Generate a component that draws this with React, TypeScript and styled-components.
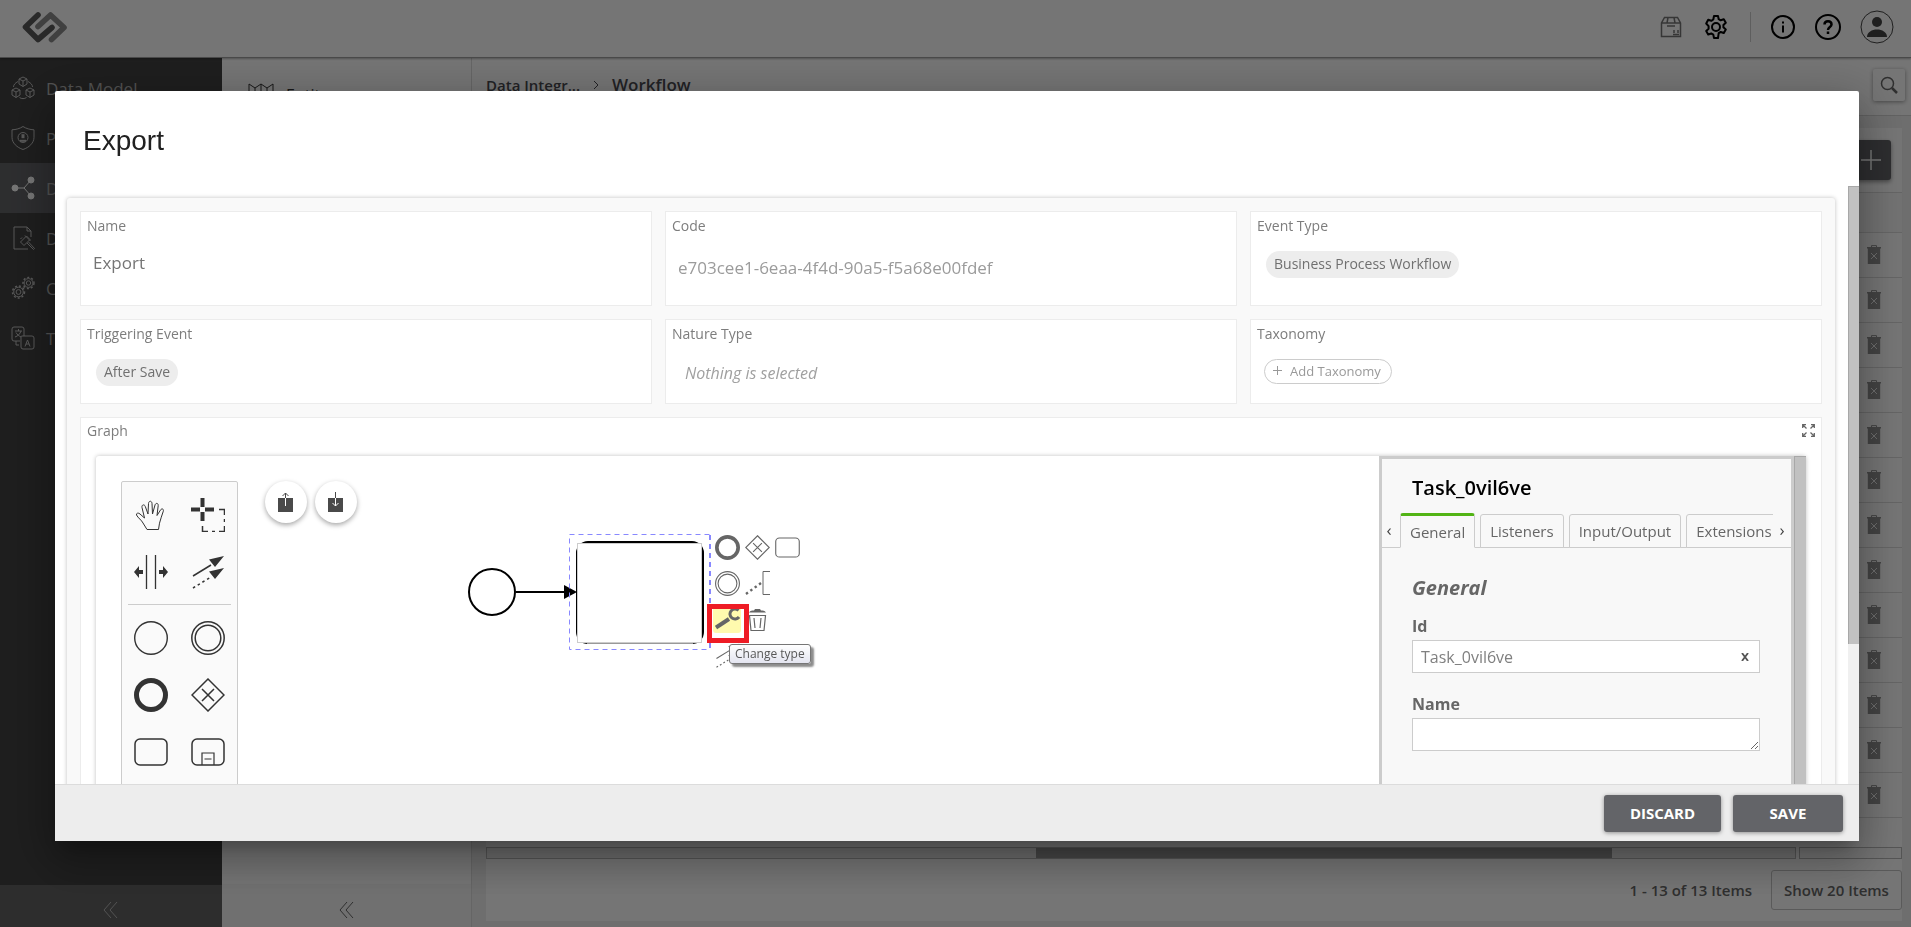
import React from 'react';
import styled, { createGlobalStyle, css } from 'styled-components';

const Global = createGlobalStyle`
  *, *::before, *::after { box-sizing: border-box; }
  html, body, #root { height: 100%; }
  body {
    margin: 0;
    overflow: hidden;
    font-family: "Open Sans", "Noto Sans", sans-serif;
    background: #f0f0f0;
  }
  button, input, textarea { font-family: inherit; margin: 0; }
  h1, h2, h3, p, ul { margin: 0; padding: 0; }
  svg { display: block; flex: none; }
`;

/* ---------- application behind the dialog ---------- */

const Shell = styled.div`
  height: 100vh;
  display: flex;
  flex-direction: column;
`;

const Header = styled.header`
  flex: none;
  height: 58px;
  padding: 0 17px 3px 22px;
  display: flex;
  align-items: center;
  justify-content: space-between;
  background: #fff;
  border-bottom: 1px solid #a0a0a0;
  box-shadow: 0 1px 2px rgba(0, 0, 0, 0.3);
  position: relative;
`;

const HeaderTools = styled.div`
  display: flex;
  align-items: center;
`;

const IconButton = styled.button<{ $gap?: number }>`
  padding: 0;
  border: 0;
  background: none;
  color: inherit;
  margin-left: ${(p) => p.$gap ?? 0}px;
`;

const Divider = styled.span`
  width: 1px;
  height: 30px;
  margin-left: 22px;
  background: #ccc;
`;

const Columns = styled.div`
  flex: 1;
  min-height: 0;
  display: flex;
`;

const Sidebar = styled.nav`
  width: 222px;
  flex: none;
  display: flex;
  flex-direction: column;
  background: #424242;
  padding-top: 5px;
`;

const NavItem = styled.a<{ $active?: boolean }>`
  height: 50px;
  padding-left: 11px;
  display: flex;
  align-items: center;
  gap: 11px;
  font-size: 17px;
  text-decoration: none;
  color: #b4b4b4;
  background: ${(p) => (p.$active ? '#636468' : 'transparent')};
  svg { color: ${(p) => (p.$active ? '#fff' : '#c0c0c0')}; }
`;

const CollapseBar = styled.button<{ $dark?: boolean }>`
  margin-top: auto;
  height: ${(p) => (p.$dark ? 42 : 43)}px;
  padding: 8px 0 0;
  border: 0;
  display: flex;
  justify-content: center;
  align-items: center;
  color: ${(p) => (p.$dark ? '#b4b4b4' : '#666')};
  background: ${(p) => (p.$dark ? '#636363' : '#f5f5f5')};
`;

const SubMenu = styled.nav`
  width: 250px;
  flex: none;
  display: flex;
  flex-direction: column;
  background: #fff;
  border-right: 1px solid #ddd;
  padding-top: 15px;
`;

const SubItem = styled.a`
  height: 44px;
  padding-left: 26px;
  display: flex;
  align-items: center;
  gap: 12px;
  font-size: 16px;
  color: #333;
  text-decoration: none;
`;

const Main = styled.main`
  flex: 1;
  min-width: 0;
  display: flex;
  flex-direction: column;
`;

const Crumbs = styled.div`
  height: 58px;
  flex: none;
  padding: 0 6px 4px 14px;
  display: flex;
  align-items: center;
  gap: 10px;
  background: #fff;
  border-bottom: 1px solid #d5d5d5;
  font-size: 15px;
  font-weight: 600;
  color: #4a4a50;
  strong { font-size: 17px; font-weight: 600; }
`;

const SearchButton = styled.button`
  margin-left: auto;
  width: 32px;
  height: 32px;
  padding: 0;
  display: grid;
  place-items: center;
  border: 0;
  border-radius: 2px;
  background: #fff;
  color: #666;
  box-shadow: 0 1px 4px rgba(0, 0, 0, 0.4);
`;

const Grid = styled.section`
  flex: 1;
  min-height: 0;
  margin: 12px 9px 6px 14px;
  background: #fff;
  display: flex;
  flex-direction: column;
`;

const GridTools = styled.div`
  height: 65px;
  padding: 12px 11px;
  display: flex;
  justify-content: flex-end;
  border-bottom: 1px solid #dcdcdc;
`;

const AddButton = styled.button`
  width: 40px;
  height: 40px;
  padding: 0;
  display: grid;
  place-items: center;
  border: 0;
  border-radius: 3px;
  color: #fff;
  background: #636468;
  box-shadow: 0 2px 4px rgba(0, 0, 0, 0.4);
`;

const Rows = styled.table`
  width: 100%;
  border-collapse: collapse;
  th { height: 39px; background: #f8f8f8; border-bottom: 1px solid #dcdcdc; padding: 0; }
  td { height: 45px; border-bottom: 1px solid #dcdcdc; padding: 0 21px 0 0; }
  td svg { margin-left: auto; color: #939393; }
`;

const ScrollRow = styled.div`
  margin-top: auto;
  flex: none;
  display: flex;
  gap: 3px;
  padding-top: 28px;
`;

const Track = styled.div<{ $wide?: boolean }>`
  height: 12px;
  display: flex;
  background: ${(p) => (p.$wide ? '#ececec' : '#fafafa')};
  border: 1px solid #b8b8b8;
  ${(p) => (p.$wide ? css`flex: 1;` : css`width: 103px;`)}
`;

const TrackThumb = styled.div`
  margin-left: 42%;
  width: 44%;
  background: #999;
`;

const Pager = styled.footer`
  flex: none;
  height: 62px;
  display: flex;
  align-items: center;
  justify-content: flex-end;
  gap: 19px;
  font-size: 15px;
  font-weight: 600;
  color: #666;
`;

const PageSize = styled.button`
  width: 131px;
  height: 40px;
  padding: 0;
  border: 1px solid #c4c4c4;
  border-radius: 3px;
  background: #fff;
  color: inherit;
  font-size: 15px;
  font-weight: 600;
`;

/* ---------- dialog ---------- */

const Backdrop = styled.div`
  position: fixed;
  inset: 0;
  padding: 91px 52px 86px 55px;
  background: rgba(0, 0, 0, 0.54);
  display: flex;
`;

const Dialog = styled.div`
  flex: 1;
  min-width: 0;
  display: flex;
  flex-direction: column;
  background: #fff;
  border-radius: 2px 2px 0 0;
  box-shadow: 0 11px 15px -7px rgba(0, 0, 0, 0.2), 0 24px 38px 3px rgba(0, 0, 0, 0.14),
    0 9px 46px 8px rgba(0, 0, 0, 0.22);
`;

const DialogTitle = styled.h1`
  flex: none;
  height: 95px;
  padding: 32px 28px 0;
  font: 400 28px/36px "Liberation Sans", Arial, sans-serif;
  color: #212121;
`;

const DialogBody = styled.div`
  flex: 1;
  min-height: 0;
  display: flex;
`;

const BodyScroll = styled.div`
  flex: 1;
  min-width: 0;
  overflow: hidden;
  padding: 12px 13px 0 12px;
`;

const VTrack = styled.div<{ $width: number }>`
  width: ${(p) => p.$width}px;
  flex: none;
  background: #f0f0f0;
`;

const VThumb = styled.div<{ $size: string }>`
  height: ${(p) => p.$size};
  background: #c1c1c1;
  border-left: 1px solid #a8a8a8;
  border-top: 1px solid #a8a8a8;
`;

const Panel = styled.div`
  padding: 13px;
  display: grid;
  grid-template-columns: repeat(3, 1fr);
  grid-template-rows: 95px 85px 500px;
  gap: 13px;
  background: #f9f9f9;
  border-radius: 3px;
  box-shadow: 0 0 4px rgba(0, 0, 0, 0.25);
`;

const Field = styled.div`
  min-width: 0;
  padding: 2px 6px;
  background: #fff;
  border: 1px solid #ececec;
`;

const FieldLabel = styled.label`
  display: block;
  font-size: 14px;
  line-height: 24px;
  color: #7d7d7d;
`;

const TextValue = styled.input<{ $muted?: boolean }>`
  display: block;
  width: 100%;
  height: 32px;
  margin-top: ${(p) => (p.$muted ? 13 : 8)}px;
  padding: 0 6px;
  border: 0;
  outline: 0;
  background: none;
  font-size: 17px;
  color: ${(p) => (p.$muted ? '#9b9b9b' : '#757575')};
`;

const Placeholder = styled.p`
  padding: 15px 13px;
  font-size: 16px;
  line-height: 24px;
  font-style: italic;
  color: #a0a0a0;
`;

const Chip = styled.span`
  display: inline-block;
  margin: 13px 9px;
  height: 27px;
  padding: 0 8px;
  border-radius: 14px;
  background: #ededed;
  font-size: 14px;
  line-height: 26px;
  color: #707070;
`;

const AddChip = styled.button`
  display: flex;
  align-items: center;
  gap: 8px;
  margin: 13px 7px;
  height: 25px;
  padding: 0 10px 2px 8px;
  border: 1px solid #ccc;
  border-radius: 13px;
  background: #fff;
  font-size: 13px;
  color: #999;
`;

const GraphField = styled(Field)`
  grid-column: 1 / -1;
  padding: 0 0 0 15px;
`;

const GraphHead = styled.div`
  height: 38px;
  margin-left: -9px;
  padding: 0 6px 13px 0;
  display: flex;
  align-items: center;
  justify-content: space-between;
  color: #666;
`;

const Editor = styled.div`
  margin-right: 15px;
  height: 460px;
  display: flex;
  border-radius: 3px 3px 0 0;
  background: #fff;
  box-shadow: 0 0 4px rgba(0, 0, 0, 0.25);
`;

const Canvas = styled.div`
  position: relative;
  flex: 1;
  min-width: 0;
  display: flex;
  align-items: flex-start;
  padding: 25px;
`;

const Palette = styled.div`
  width: 117px;
  height: 420px;
  padding: 4px 0 0;
  background: #fafafa;
  border: 1px solid #ccc;
  border-radius: 2px;
`;

const ToolGroup = styled.div`
  margin: 0 6px;
  padding-bottom: 4px;
  display: grid;
  grid-template-columns: 46px 46px;
  justify-content: space-between;
  grid-auto-rows: 57px;
  & + & { border-top: 1px solid #ccc; padding-top: 4px; }
`;

const Tool = styled.button`
  padding: 0;
  border: 0;
  background: none;
  display: grid;
  place-items: center;
  color: #333;
`;

const RoundButtons = styled.div`
  display: flex;
  gap: 8px;
  margin-left: 27px;
`;

const RoundButton = styled.button`
  width: 42px;
  height: 42px;
  padding: 0 1px 0 0;
  border: 0;
  border-radius: 50%;
  background: #fff;
  display: grid;
  place-items: center;
  box-shadow: 0 2px 5px rgba(0, 0, 0, 0.35);
`;

const Diagram = styled.svg`
  position: absolute;
  left: 364px;
  top: 69px;
`;

const PadArea = styled.div`
  position: absolute;
  left: 617px;
  top: 77px;
  display: grid;
  grid-template-columns: repeat(3, 30px);
  grid-auto-rows: 36px;
`;

const PadButton = styled.button<{ $hot?: boolean }>`
  width: 28px;
  height: 28px;
  padding: 0;
  border: 0;
  border-radius: 3px;
  display: grid;
  place-items: center;
  color: #666;
  background: ${(p) => (p.$hot ? '#fffaae' : 'none')};
  grid-column: ${(p) => (p.$hot ? '1' : 'auto')};
`;

const RedFrame = styled.div`
  position: absolute;
  left: 611px;
  top: 148px;
  width: 42px;
  height: 39px;
  border: 5px solid #ee1c25;
  pointer-events: none;
`;

const Tooltip = styled.div`
  position: absolute;
  left: 633px;
  top: 188px;
  padding: 0 5px;
  border: 1px solid #767676;
  border-radius: 3px;
  background: linear-gradient(#fff, #e4e5f0);
  box-shadow: 3px 3px 2px rgba(0, 0, 0, 0.45);
  font-size: 12px;
  line-height: 18px;
  white-space: nowrap;
  color: #575757;
`;

const Properties = styled.aside`
  width: 415px;
  flex: none;
  border: 3px solid #ccc;
  border-bottom: 0;
  background: #f8f8f8;
  color: #666;
`;

const ElementName = styled.h2`
  padding: 14px 30px 0;
  font-size: 20px;
  line-height: 30px;
  font-weight: 600;
  color: #000;
`;

const Tabs = styled.div`
  margin-top: 10px;
  height: 35px;
  display: flex;
  border-bottom: 1px solid #ccc;
`;

const TabList = styled.div`
  flex: 1;
  min-width: 0;
  height: 35px;
  display: flex;
  gap: 5px;
  overflow: hidden;
`;

const TabArrow = styled.button`
  width: 18px;
  flex: none;
  padding: 0 4px 2px 0;
  border: 0;
  background: none;
  font-size: 17px;
  color: #444;
  &:last-child { padding: 0 0 2px; }
`;

const Tab = styled.button<{ $active?: boolean }>`
  flex: none;
  padding: 0 9px;
  border: 1px solid #ccc;
  border-radius: 3px 3px 0 0;
  background: #f8f8f8;
  font-size: 15px;
  color: #666;
  margin-top: 1px;
  ${(p) =>
    p.$active &&
    css`
      margin-top: 0;
      border-top: 3px solid #52b415;
      border-bottom-color: #f8f8f8;
    `}
`;

const PropForm = styled.div`
  padding: 24px 31px 0 30px;
`;

const GroupTitle = styled.h3`
  font-size: 20px;
  line-height: 32px;
  font-style: italic;
  font-weight: 700;
`;

const PropLabel = styled.label`
  display: block;
  margin-top: 8px;
  font-size: 16px;
  line-height: 28px;
  font-weight: 700;
`;

const PropInputBox = styled.div`
  height: 33px;
  margin: 0 0 17px;
  display: flex;
  align-items: center;
  background: #fff;
  border: 1px solid #ccc;
`;

const PropInput = styled.input`
  flex: 1;
  min-width: 0;
  padding: 0 8px;
  border: 0;
  outline: 0;
  background: none;
  font-size: 16px;
  color: #808080;
`;

const ClearButton = styled.button`
  width: 28px;
  padding: 0;
  border: 0;
  background: none;
  display: grid;
  place-items: center;
  color: #555;
`;

const PropTextarea = styled.textarea`
  display: block;
  width: 100%;
  height: 33px;
  border: 1px solid #ccc;
  background: #fff;
`;

const DialogFooter = styled.div`
  flex: none;
  height: 57px;
  padding: 0 16px;
  display: flex;
  align-items: center;
  justify-content: flex-end;
  gap: 12px;
  background: #ededed;
  border-top: 1px solid #dcdcdc;
`;

const ActionButton = styled.button<{ $width: number }>`
  width: ${(p) => p.$width}px;
  height: 37px;
  padding: 0;
  border: 0;
  border-radius: 3px;
  background: #636468;
  color: #fff;
  font-size: 15px;
  font-weight: 700;
  box-shadow: 0 1px 4px rgba(0, 0, 0, 0.4);
`;

/* ---------- icons ---------- */

type GlyphProps = { size?: number; children: React.ReactNode; sw?: number; box?: number };
const Glyph = ({ size = 24, box = 24, sw = 1, children }: GlyphProps) => (
  <svg width={size} height={size} viewBox={`0 0 ${box} ${box}`} fill="none" stroke="currentColor" strokeWidth={sw}>
    {children}
  </svg>
);

const Logo = () => (
  <svg width="46" height="33" viewBox="0 0 46 33" fill="none" strokeWidth="5.6" strokeLinecap="round" strokeLinejoin="round">
    <path d="M16 15.500 28.500 4 42 16.500 29.500 28.500" stroke="#8b8b8b" />
    <path d="M16 4 3.500 16 16 28.500 30 16.500" stroke="#5a5a5a" />
  </svg>
);

const Cube = ({ x, y }: { x: number; y: number }) => (
  <path d={`M${x} ${y - 4.5}l4 2v5l-4 2.5-4-2.5v-5zM${x - 4} ${y - 2.5}l4 2 4-2M${x} ${y - 0.5}v5.5`} />
);
const CubesIcon = () => (
  <Glyph>
    <Cube x={12} y={5.5} /><Cube x={5} y={16.5} /><Cube x={19} y={16.5} />
    <path d="M7 5.500C4 7 2.500 9 2.500 11M17 5.500c3 1.500 4.500 3.500 4.500 5.500M8.500 21.500c2 1.500 5 1.500 7 0" />
  </Glyph>
);
const ShieldIcon = () => (
  <Glyph>
    <path d="M12 .5c3 2 7 3.200 11 3.300v7.500C23 17 18 21.500 12 23.500 6 21.500 1 17 1 11.300V3.800C5 3.700 9 2.500 12 .5z" />
    <circle cx="12" cy="11.500" r="5" />
    <path d="M12 8.200v4" strokeWidth="3" /><path d="M9 14.800h6" strokeWidth="2" />
  </Glyph>
);
const ShareIcon = () => (
  <Glyph>
    <path d="M4 12h9l7-8M13 12l7 8" />
    <g fill="currentColor"><circle cx="4" cy="12" r="3" /><circle cx="20" cy="4" r="3" /><circle cx="20" cy="20" r="3" /></g>
  </Glyph>
);
const DocIcon = () => (
  <Glyph><path d="M17 23H3V1h13l4 4v6M16 1v4h4M9.500 16l6-6 3.500 3.500-6 6zM16 17l6.500 6.500 1-1L17.500 16M11 11.500l-1.500 1.500M14 9.500l5.500 5.500" /></Glyph>
);
const Cog = ({ x, y, r }: { x: number; y: number; r: number }) => (
  <g><circle cx={x} cy={y} r={r * 0.4} /><circle cx={x} cy={y} r={r * 0.8} /><circle cx={x} cy={y} r={r} strokeDasharray="2 2" strokeWidth="1.500" /></g>
);
const CogsIcon = () => <Glyph><Cog x={7.5} y={16} r={6} /><Cog x={17.5} y={7} r={5.5} /></Glyph>;
const TranslateIcon = () => (
  <Glyph><path d="M9 15H3a2 2 0 0 1-2-2V3a2 2 0 0 1 2-2h8a2 2 0 0 1 2 2v7M11 10h10a2 2 0 0 1 2 2v9a2 2 0 0 1-2 2H12a2 2 0 0 1-2-2V11a1 1 0 0 1 1-1zM4 5h7M7.500 3v2M10 5c-1 3-3 5-6 6M5 6.500c1 2 3 3.500 5 4.500M14 20.500l2.500-6.500 2.500 6.500M15 18h3M5 15v4h3" /></Glyph>
);
const MapIcon = () => <Glyph size={26} box={26}><path d="M1 2l6 4 6-4 6 4 6-4v18l-6 4-6-4-6 4-6-4zM7 6v18M13 2v18M19 6v18" /></Glyph>;
const DoubleLeft = () => <Glyph size={18} box={18} sw={1}><path d="M9 1 2 9l7 8M15 1 8 9l7 8" /></Glyph>;

const BoxIcon = () => (
  <svg width="22" height="22" viewBox="0 0 22 22" fill="none" stroke="#777" strokeWidth="1.500">
    <path d="M1.500 7v13.500h19V7l-3-5.500h-13zM1.500 7h19M8 1.500 7 7M14 1.500 15 7M7 10h8M14 14v3M18 14v3M13 18.500h6" />
  </svg>
);
const GearIcon = () => (
  <Glyph sw={2}>
    <path d="M10 1h4l.7 3.200 2 1.100 3.100-1 2 3.500-2.400 2.200v2.300l2.400 2.200-2 3.500-3.100-1-2 1.100L14 23h-4l-.7-3.400-2-1.100-3.100 1-2-3.500 2.400-2.200v-2.600L2.200 8.500l2-3.700 3.100 1 2-1.300z" strokeLinejoin="round" />
    <circle cx="12" cy="12" r="4" />
  </Glyph>
);
const InfoIcon = () => (
  <Glyph sw={2}><circle cx="12" cy="12" r="11" /><path d="M12 10.500v7M12 6.500v2" /></Glyph>
);
const HelpIcon = () => (
  <Glyph size={26} box={26} sw={2}><circle cx="13" cy="13" r="12" /><path d="M9.500 10.500c0-4.500 7-4.500 7 0 0 2.500-3.500 2.500-3.500 5.500M13 17.500v2.500" strokeWidth="2.500" /></Glyph>
);
const AvatarIcon = () => (
  <svg width="34" height="34" viewBox="0 0 34 34">
    <circle cx="17" cy="17" r="16" fill="none" stroke="#444" strokeWidth="1" />
    <circle cx="17" cy="12" r="5" fill="#444" /><path d="M7 27c0-10 20-10 20 0z" fill="#444" />
  </svg>
);
const TrashIcon = () => (
  <svg width="14" height="19" viewBox="0 0 14 19">
    <path d="M0 2h14v1.500H0zM.8 3.500h12.400V19H.8z" fill="currentColor" />
    <path d="M4.500 2V.6h5V2" stroke="currentColor" fill="none" />
    <path d="M4 8l6 6M10 8l-6 6" stroke="#eee" />
  </svg>
);
const ExpandIcon = () => (
  <Glyph size={13} box={13} sw={1.3}><path d="M4.500 4.500 1 1M8.500 4.500 12 1M4.500 8.500 1 12M8.500 8.500 12 12M.7 4V.7H4M9 .7h3.300V4M.7 9v3.300H4M9 12.300h3.300V9" /></Glyph>
);

const HandIcon = () => (
  <Glyph size={34} box={34}><path d="M13 31.500 9 25C7.500 22 4 20 2.500 17c-.5-2 2-2.500 3.500-1l4.500 4L8 9.500c-.5-3 2.500-3.500 3.300-1L14 16l.5-10.500c.3-3 3.300-3 3.500 0L18.500 16l2.500-9c.8-2.500 3.500-2 3.200.7L23 17.500l3.500-5.500c1.300-2 3.500-1 2.800 1.200-1.300 4-2.800 8-3.800 12l-1 6.300z" /></Glyph>
);
const LassoIcon = () => (
  <Glyph size={34} box={34} sw={4}>
    <path d="M11.500 0v9M11.500 14v9M0 11.500h9M14 11.500h9" />
    <path d="M28 11.500h5.500V17M33.500 21v3M33.500 28v5.500H28M24 33.500h-3M17 33.500h-5.500V28" strokeWidth="1.500" />
  </Glyph>
);
const SpaceIcon = () => (
  <Glyph size={34} box={34}>
    <path d="M12.500 0v34M21.500 0v34" strokeWidth="1.300" />
    <path d="M0 17l5-6v4h4v4H5v4zM34 17l-5-6v4h-4v4h4v4z" fill="currentColor" stroke="none" />
  </Glyph>
);
const ConnectIcon = ({ size = 34 }: { size?: number }) => (
  <Glyph size={size} box={34}>
    <path d="M2 21 20 10" strokeWidth="1.500" /><path d="M2 33l18-11" strokeWidth="1.500" strokeDasharray="2.500 3" />
    <path d="M33 1 24 12l-6-7.500zM33 13l-9 11-6-7.500z" fill="currentColor" stroke="none" />
  </Glyph>
);
const CircleIcon = () => <Glyph size={34} box={34} sw={1.4}><circle cx="17" cy="17" r="16.300" /></Glyph>;
const DoubleCircleIcon = ({ size = 34 }: { size?: number }) => (
  <Glyph size={size} box={34} sw={1.5}><circle cx="17" cy="17" r="16.200" /><circle cx="17" cy="17" r="12.800" /></Glyph>
);
const BoldCircleIcon = ({ size = 34 }: { size?: number }) => (
  <Glyph size={size} box={34} sw={5}><circle cx="17" cy="17" r="14.500" /></Glyph>
);
const GatewayIcon = ({ size = 34 }: { size?: number }) => (
  <Glyph size={size} box={34} sw={1.5}><path d="M17 1l16 16-16 16L1 17zM11 11l12 12M23 11 11 23" /></Glyph>
);
const TaskIcon = ({ size = 34 }: { size?: number }) => (
  <Glyph size={size} box={34} sw={1.5}><rect x="1" y="4" width="32" height="26" rx="5" /></Glyph>
);
const SubProcessIcon = () => (
  <Glyph size={34} box={34} sw={1.5}><rect x="1" y="4" width="32" height="26" rx="5" /><path d="M11 30V18h12v12M13.500 24h7" strokeWidth="1.200" /></Glyph>
);
const AnnotationIcon = () => (
  <Glyph size={25} box={25}><path d="M25 .5h-7v23h7" /><path d="M1 23l15-11" strokeWidth="2.400" strokeDasharray="2.400 3" /></Glyph>
);
const WrenchIcon = () => (
  <Glyph size={25} box={25}><path d="M1 20.500 14 12" strokeWidth="4" /><path d="M23.500 3.500a5 5 0 1 0 .5 6.500" strokeWidth="3" /></Glyph>
);
const BinIcon = () => (
  <Glyph size={25} box={25}>
    <path d="M4.500 8.500h16l-1.500 15H6zM9 11l1 10M16 11l-1 10" strokeWidth="1.200" />
    <path d="M4 5.500c1.500-2 3-2 5-2L10 2h5l1 1.500c2 0 3.500 0 5 2z" fill="currentColor" stroke="none" />
  </Glyph>
);
const ExportIcon = () => (
  <svg width="15" height="20" viewBox="0 0 15 20" fill="none"><path d="M0 6h15v14H0z" fill="#4a4a4a" /><path d="M7.500 6V1M4.500 4l3-3 3 3" stroke="#4a4a4a" /><path d="M7.500 6v8" stroke="#fff" /></svg>
);
const ImportIcon = () => (
  <svg width="15" height="20" viewBox="0 0 15 20" fill="none"><path d="M0 6h15v14H0z" fill="#4a4a4a" /><path d="M7.500 6V0" stroke="#4a4a4a" /><path d="M7.500 6v8M4.500 11l3 3 3-3" stroke="#fff" /></svg>
);

const BpmnDiagram = () => (
  <Diagram width="262" height="132" viewBox="460 525 262 132" fill="none" aria-label="Process diagram">
    <circle cx="492" cy="592" r="23" stroke="#000" strokeWidth="2" />
    <rect x="577" y="542" width="126" height="101" rx="11" stroke="#000" strokeWidth="2" fill="#fff" />
    <rect x="577.500" y="543.500" width="124" height="99" stroke="#ccc" fill="#fff" />
    <path d="M587 643.500h106" stroke="#999" />
    <path d="M516 592h50" stroke="#000" strokeWidth="2" />
    <path d="M564 585v14l13-7z" fill="#000" />
    <path d="M709.500 534.500h-140v115h140" stroke="#8888ff" strokeDasharray="5 4" />
    <path d="M710 535v114" stroke="#8888ff" strokeWidth="2" strokeDasharray="5 4" />
  </Diagram>
);

/* ---------- page ---------- */

const navItems = [
  { label: 'Data Model', icon: <CubesIcon /> },
  { label: 'P', icon: <ShieldIcon /> },
  { label: 'D', icon: <ShareIcon />, active: true },
  { label: 'D', icon: <DocIcon /> },
  { label: 'C', icon: <CogsIcon /> },
  { label: 'T', icon: <TranslateIcon /> },
];

const rows = Array.from({ length: 13 }, (_, i) => i);

const Background = () => (
  <Shell>
    <Header>
      <Logo />
      <HeaderTools>
        <IconButton aria-label="Packages"><BoxIcon /></IconButton>
        <IconButton $gap={22} aria-label="Settings"><GearIcon /></IconButton>
        <Divider />
        <IconButton $gap={20} aria-label="Information"><InfoIcon /></IconButton>
        <IconButton $gap={20} aria-label="Help"><HelpIcon /></IconButton>
        <IconButton $gap={19} aria-label="Account"><AvatarIcon /></IconButton>
      </HeaderTools>
    </Header>
    <Columns>
      <Sidebar>
        {navItems.map((n, i) => (
          <NavItem key={i} href="#" $active={n.active}>{n.icon}{n.label}</NavItem>
        ))}
        <CollapseBar $dark aria-label="Collapse navigation"><DoubleLeft /></CollapseBar>
      </Sidebar>
      <SubMenu>
        <SubItem href="#"><MapIcon />Entity</SubItem>
        <CollapseBar aria-label="Collapse menu"><DoubleLeft /></CollapseBar>
      </SubMenu>
      <Main>
        <Crumbs>
          <span>Data Integr...</span>
          <Glyph size={12} box={12}><path d="M4 2l4 4-4 4" /></Glyph>
          <strong>Workflow</strong>
          <SearchButton aria-label="Search"><Glyph size={18} box={18} sw={1.5}><circle cx="7.500" cy="7.500" r="6" /><path d="M12 12l5 5" strokeWidth="2.500" /></Glyph></SearchButton>
        </Crumbs>
        <Grid>
          <GridTools>
            <AddButton aria-label="Add"><Glyph size={20} box={20} sw={1.5}><path d="M10 0v20M0 10h20" /></Glyph></AddButton>
          </GridTools>
          <Rows>
            <thead><tr><th /></tr></thead>
            <tbody>{rows.map((r) => <tr key={r}><td><TrashIcon /></td></tr>)}</tbody>
          </Rows>
          <ScrollRow>
            <Track $wide><TrackThumb /></Track>
            <Track />
          </ScrollRow>
          <Pager>
            <span>1 - 13 of 13 Items</span>
            <PageSize>Show 20 Items</PageSize>
          </Pager>
        </Grid>
      </Main>
    </Columns>
  </Shell>
);

const Modeler = () => (
  <Editor>
    <Canvas>
      <Palette>
        <ToolGroup>
          <Tool aria-label="Hand tool"><HandIcon /></Tool>
          <Tool aria-label="Lasso tool"><LassoIcon /></Tool>
          <Tool aria-label="Space tool"><SpaceIcon /></Tool>
          <Tool aria-label="Connect tool"><ConnectIcon /></Tool>
        </ToolGroup>
        <ToolGroup>
          <Tool aria-label="Start event"><CircleIcon /></Tool>
          <Tool aria-label="Intermediate event"><DoubleCircleIcon /></Tool>
          <Tool aria-label="End event"><BoldCircleIcon /></Tool>
          <Tool aria-label="Gateway"><GatewayIcon /></Tool>
          <Tool aria-label="Task"><TaskIcon /></Tool>
          <Tool aria-label="Sub process"><SubProcessIcon /></Tool>
        </ToolGroup>
      </Palette>
      <RoundButtons>
        <RoundButton aria-label="Export diagram"><ExportIcon /></RoundButton>
        <RoundButton aria-label="Import diagram"><ImportIcon /></RoundButton>
      </RoundButtons>
      <BpmnDiagram />
      <PadArea>
        <PadButton aria-label="Append end event"><BoldCircleIcon size={25} /></PadButton>
        <PadButton aria-label="Append gateway"><GatewayIcon size={25} /></PadButton>
        <PadButton aria-label="Append task"><TaskIcon size={25} /></PadButton>
        <PadButton aria-label="Append intermediate event"><DoubleCircleIcon size={25} /></PadButton>
        <PadButton aria-label="Append annotation"><AnnotationIcon /></PadButton>
        <PadButton $hot aria-label="Change type"><WrenchIcon /></PadButton>
        <PadButton aria-label="Remove"><BinIcon /></PadButton>
        <span />
        <PadButton aria-label="Connect"><ConnectIcon size={25} /></PadButton>
      </PadArea>
      <RedFrame />
      <Tooltip role="tooltip">Change type</Tooltip>
    </Canvas>
    <Properties>
      <ElementName>Task_0vil6ve</ElementName>
      <Tabs>
        <TabArrow aria-label="Previous tabs">‹</TabArrow>
        <TabList role="tablist">
          <Tab role="tab" $active>General</Tab>
          <Tab role="tab">Listeners</Tab>
          <Tab role="tab">Input/Output</Tab>
          <Tab role="tab">Extensions</Tab>
        </TabList>
        <TabArrow aria-label="Next tabs">›</TabArrow>
      </Tabs>
      <PropForm>
        <GroupTitle>General</GroupTitle>
        <PropLabel htmlFor="element-id">Id</PropLabel>
        <PropInputBox>
          <PropInput id="element-id" defaultValue="Task_0vil6ve" />
          <ClearButton aria-label="Clear"><Glyph size={8} box={8} sw={1.8}><path d="M1 0l6 8M7 0 1 8" /></Glyph></ClearButton>
        </PropInputBox>
        <PropLabel htmlFor="element-name">Name</PropLabel>
        <PropTextarea id="element-name" />
      </PropForm>
    </Properties>
    <VTrack $width={12}><VThumb $size="100%" /></VTrack>
  </Editor>
);

export default function App() {
  return (
    <>
      <Global />
      <Background />
      <Backdrop>
        <Dialog role="dialog" aria-labelledby="dialog-title">
          <DialogTitle id="dialog-title">Export</DialogTitle>
          <DialogBody>
            <BodyScroll>
              <Panel>
                <Field><FieldLabel htmlFor="name">Name</FieldLabel><TextValue id="name" defaultValue="Export" /></Field>
                <Field><FieldLabel htmlFor="code">Code</FieldLabel><TextValue id="code" $muted readOnly value="e703cee1-6eaa-4f4d-90a5-f5a68e00fdef" /></Field>
                <Field><FieldLabel as="div">Event Type</FieldLabel><Chip>Business Process Workflow</Chip></Field>
                <Field><FieldLabel as="div">Triggering Event</FieldLabel><Chip>After Save</Chip></Field>
                <Field><FieldLabel as="div">Nature Type</FieldLabel><Placeholder>Nothing is selected</Placeholder></Field>
                <Field><FieldLabel as="div">Taxonomy</FieldLabel><AddChip><Glyph size={9} box={9}><path d="M4.500 0v9M0 4.500h9" /></Glyph>Add Taxonomy</AddChip></Field>
                <GraphField>
                  <GraphHead>
                    <FieldLabel as="div">Graph</FieldLabel>
                    <IconButton aria-label="Expand"><ExpandIcon /></IconButton>
                  </GraphHead>
                  <Modeler />
                </GraphField>
              </Panel>
            </BodyScroll>
            <VTrack $width={11}><VThumb $size="458px" /></VTrack>
          </DialogBody>
          <DialogFooter>
            <ActionButton $width={117}>DISCARD</ActionButton>
            <ActionButton $width={110}>SAVE</ActionButton>
          </DialogFooter>
        </Dialog>
      </Backdrop>
    </>
  );
}
